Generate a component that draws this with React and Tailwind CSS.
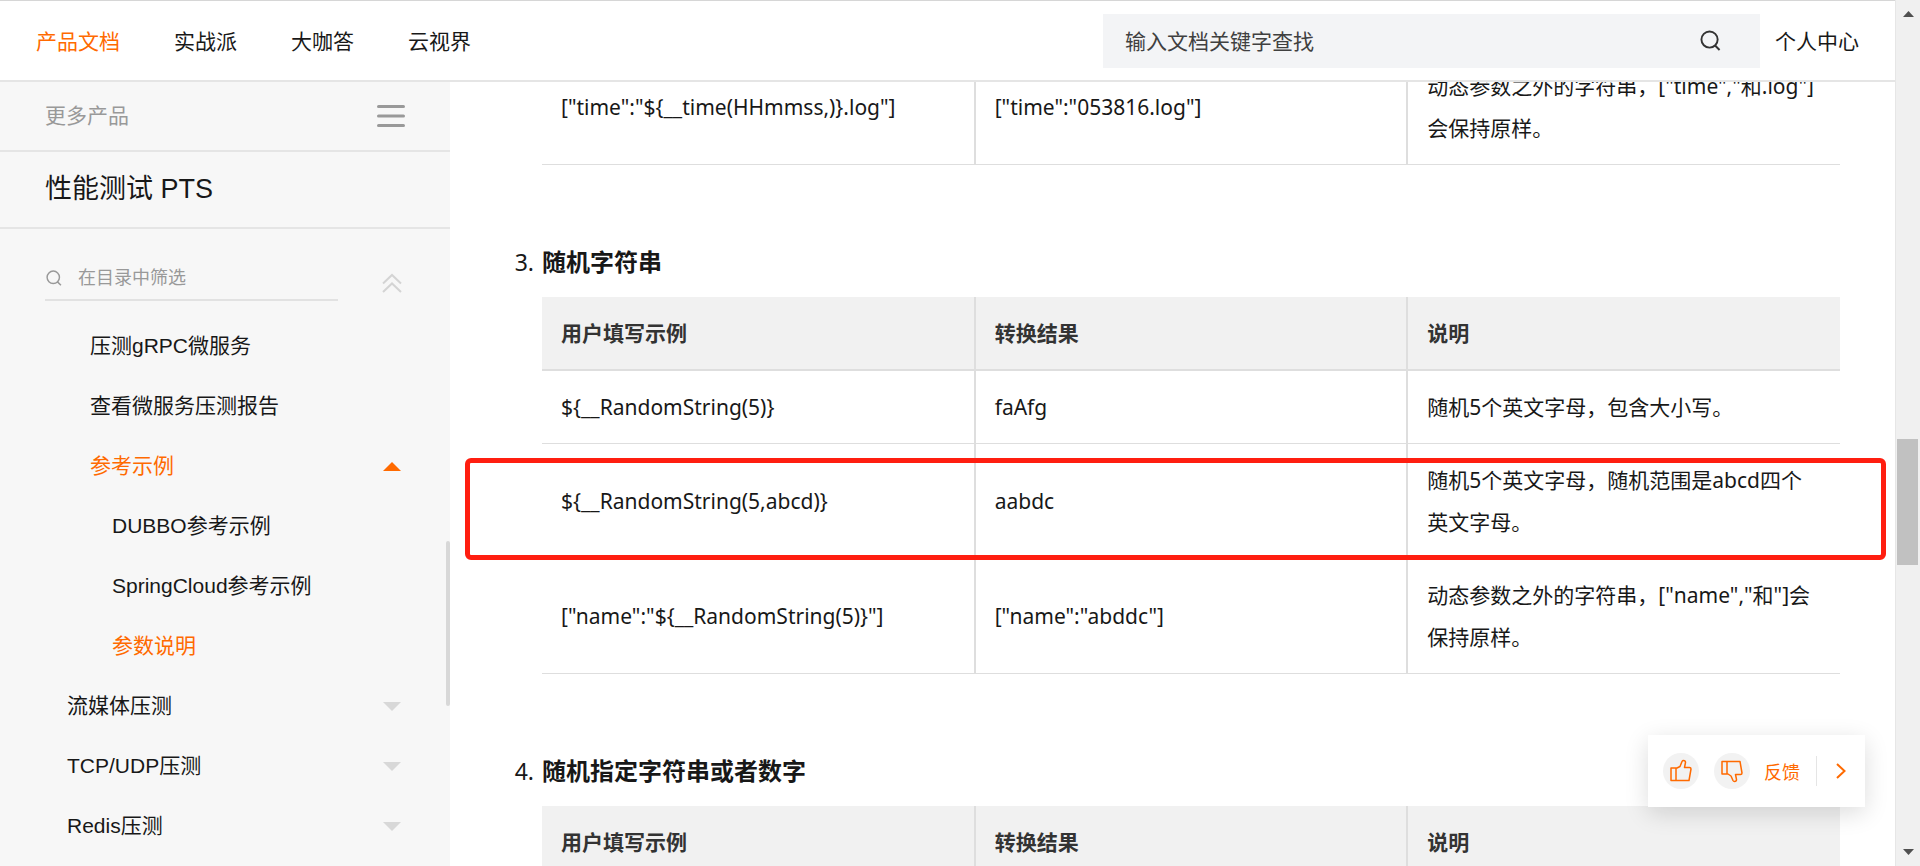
import React from 'react';

const navLinks = [
  { label: '产品文档', active: true },
  { label: '实战派' },
  { label: '大咖答' },
  { label: '云视界' },
];

const treeItems = [
  { label: '压测gRPC微服务', indent: 'pl-[90px]' },
  { label: '查看微服务压测报告', indent: 'pl-[90px]' },
  { label: '参考示例', indent: 'pl-[90px]', caret: 'up', active: true },
  { label: 'DUBBO参考示例', indent: 'pl-[112px]' },
  { label: 'SpringCloud参考示例', indent: 'pl-[112px]' },
  { label: '参数说明', indent: 'pl-[112px]', active: true },
  { label: '流媒体压测', indent: 'pl-[67px]', caret: 'down' },
  { label: 'TCP/UDP压测', indent: 'pl-[67px]', caret: 'down' },
  { label: 'Redis压测', indent: 'pl-[67px]', caret: 'down' },
];

const columns = ['用户填写示例', '转换结果', '说明'];

const timeRows = [
  ['["time":"${__time(HHmmss,)}.log"]', '["time":"053816.log"]', '动态参数之外的字符串，["time","和.log"]会保持原样。'],
];

const randomStringRows = [
  ['${__RandomString(5)}', 'faAfg', '随机5个英文字母，包含大小写。'],
  ['${__RandomString(5,abcd)}', 'aabdc', '随机5个英文字母，随机范围是abcd四个英文字母。'],
  ['["name":"${__RandomString(5)}"]', '["name":"abddc"]', '动态参数之外的字符串，["name","和"]会保持原样。'],
];

function SearchIcon({ className }) {
  return (
    <svg viewBox="0 0 22 22" className={className} fill="none" stroke="currentColor" strokeWidth="2" aria-hidden="true">
      <circle cx="10" cy="10" r="8.5" />
      <path d="M15.5 16l5 5" />
    </svg>
  );
}

function Caret({ direction }) {
  return (
    <svg
      viewBox="0 0 18 9"
      className={direction === 'up' ? 'w-[18px] h-[9px] text-[#ff6a00]' : 'w-[18px] h-[9px] text-[#d8d8d8]'}
      fill="currentColor"
      aria-hidden="true"
    >
      <path d={direction === 'up' ? 'M0 9L9 0L18 9Z' : 'M0 0H18L9 9Z'} />
    </svg>
  );
}

function ThumbIcon({ down }) {
  return (
    <svg viewBox="0 0 24 24" className="w-6 h-6" fill="none" stroke="currentColor" strokeWidth="1.5" strokeLinejoin="round" aria-hidden="true">
      {down ? (
        <path d="M2 2.5H20L22 14Q22 15.5 20.5 15.5H15.5L16.5 20.5Q16.5 22.5 14.5 22.5Q13.5 22.5 13 21.5L11 17L8 15H2ZM7 2.5V15" />
      ) : (
        <path d="M2 9H8L11 7.5L13 2.5Q13.5 1.5 14.5 1.5Q16.5 1.5 16.5 3.5L15.5 8.5H20.5Q22 8.5 22 10L20 21.5H2ZM7 9V21.5" />
      )}
    </svg>
  );
}

function Header() {
  return (
    <header className="h-[82px] shrink-0 flex items-center justify-between border-t border-t-[#d6d6d6] border-b-2 border-b-[#e5e5e5] bg-white pl-9 pr-9 text-[21px] text-[#181818]">
      <nav className="flex gap-[54px]">
        {navLinks.map((link) => (
          <a key={link.label} href="#" className={link.active ? 'text-[#ff6a00]' : ''}>
            {link.label}
          </a>
        ))}
      </nav>
      <div className="flex items-center gap-[15px]">
        <form className="w-[657px] h-[54px] flex items-center bg-[#f3f4f6] pl-[22px] pr-[39px]">
          <input
            type="text"
            aria-label="输入文档关键字查找"
            placeholder="输入文档关键字查找"
            className="grow bg-transparent outline-none placeholder:text-[#404040]"
          />
          <button type="button" aria-label="搜索" className="text-[#333]">
            <SearchIcon className="w-[21px] h-[21px]" />
          </button>
        </form>
        <a href="#">个人中心</a>
      </div>
    </header>
  );
}

function Sidebar() {
  return (
    <aside className="relative w-[450px] shrink-0 overflow-hidden bg-[#f7f7f7] font-['Liberation_Sans','Noto_Sans_CJK_SC',sans-serif] text-[21px] text-[#181818]">
      <div className="h-[70px] flex items-center justify-between border-b-2 border-[#e5e5e5] pl-[45px] pr-[45px] text-[#999]">
        <a href="#">更多产品</a>
        <button type="button" aria-label="展开产品列表">
          <svg viewBox="0 0 28 24" className="w-7 h-6" stroke="currentColor" strokeWidth="3" strokeLinecap="round" aria-hidden="true">
            <path d="M1.5 2.5H26.5M1.5 12H26.5M1.5 21.5H26.5" />
          </svg>
        </button>
      </div>
      <h2 className="h-[77px] flex items-center border-b-2 border-[#e5e5e5] pl-[45px] text-[27px]">性能测试 PTS</h2>
      <div className="flex items-center justify-between pl-[45px] pr-12 pt-7 pb-[15px]">
        <label className="w-[293px] h-11 flex items-center gap-4 border-b-2 border-[#e2e2e2] pl-px text-[#999]">
          <SearchIcon className="w-4 h-4 shrink-0" />
          <input
            type="text"
            aria-label="在目录中筛选"
            placeholder="在目录中筛选"
            className="min-w-0 grow bg-transparent text-lg outline-none placeholder:text-[#999]"
          />
        </label>
        <button type="button" aria-label="全部收起" className="pt-2 text-[#d4d4d4]">
          <svg viewBox="0 0 20 20" className="w-5 h-5" fill="none" stroke="currentColor" strokeWidth="2" aria-hidden="true">
            <path d="M1 10.5L10 2L19 10.5M1 19L10 10.5L19 19" />
          </svg>
        </button>
      </div>
      <ul>
        {treeItems.map((item) => (
          <li key={item.label} className={item.indent}>
            <a
              href="#"
              className={
                item.active
                  ? 'h-[60px] flex items-center justify-between pr-[49px] text-[#ff6a00]'
                  : 'h-[60px] flex items-center justify-between pr-[49px]'
              }
            >
              {item.label}
              {item.caret && <Caret direction={item.caret} />}
            </a>
          </li>
        ))}
      </ul>
      {/* Scroll thumb */}
      <div className="absolute right-0 top-[459px] w-1 h-[165px] rounded-full bg-[#d8d8d8]" />
    </aside>
  );
}

function DocTable({ rows, showHead = true }) {
  return (
    <table className="w-full table-fixed border-collapse text-left text-[21px] leading-[42px]">
      {showHead && (
        <thead>
          <tr className="border-b-2 border-[#dedede] bg-[#f1f1f1] text-[#333]">
            {columns.map((name) => (
              <th key={name} scope="col" className="border-l-2 border-[#dedede] px-[19px] py-[15px] font-bold first:border-l-0">
                {name}
              </th>
            ))}
          </tr>
        </thead>
      )}
      <tbody>
        {rows.map((cells) => (
          <tr key={cells[0]} className="border-b border-[#dedede]">
            {cells.map((cell) => (
              <td key={cell} className="border-l-2 border-[#dedede] px-[19px] py-[15px] first:border-l-0">
                {cell}
              </td>
            ))}
          </tr>
        ))}
      </tbody>
    </table>
  );
}

function Section({ number, title, children }) {
  return (
    <li className="grid grid-cols-[92px_minmax(0,1fr)] pt-[76px]">
      <span className="pr-2 text-right text-[23px] leading-[42px]">{number}.</span>
      <h3 className="mb-[14px] text-2xl leading-[42px] font-bold">{title}</h3>
      <div className="relative col-start-2">{children}</div>
    </li>
  );
}

function FeedbackBar() {
  return (
    <div className="absolute right-[30px] bottom-[59px] w-[217px] h-[72px] flex items-center bg-white pl-[15px] pr-[19px] text-lg text-[#ff6a00] shadow-[0_6px_24px_rgba(0,0,0,0.14)]">
      <button type="button" aria-label="有帮助" className="w-9 h-9 flex items-center justify-center rounded-full bg-[#f2f2f2]">
        <ThumbIcon />
      </button>
      <button type="button" aria-label="没帮助" className="ml-[15px] w-9 h-9 flex items-center justify-center rounded-full bg-[#f2f2f2]">
        <ThumbIcon down />
      </button>
      <button type="button" className="ml-[14px]">反馈</button>
      <span className="ml-4 w-px h-[30px] bg-[#e5e5e5]" />
      <button type="button" aria-label="收起" className="ml-auto">
        <svg viewBox="0 0 10 16" className="w-[10px] h-4" fill="none" stroke="currentColor" strokeWidth="2" aria-hidden="true">
          <path d="M1 1L8.5 8L1 15" />
        </svg>
      </button>
    </div>
  );
}

function PageScrollbar() {
  return (
    <div className="relative w-[25px] shrink-0 flex flex-col items-center justify-between border-l border-[#e6e6e6] bg-[#f0f0f0] py-[11px] text-[#505050]">
      <svg viewBox="0 0 11 6" className="w-[11px] h-[6px]" fill="currentColor" aria-hidden="true">
        <path d="M0 6L5.5 0L11 6Z" />
      </svg>
      <div className="absolute top-[439px] left-px w-[21px] h-[126px] bg-[#c1c1c1]" />
      <svg viewBox="0 0 11 6" className="w-[11px] h-[6px]" fill="currentColor" aria-hidden="true">
        <path d="M0 0H11L5.5 6Z" />
      </svg>
    </div>
  );
}

export default function App() {
  return (
    <div className="h-screen flex overflow-hidden bg-white font-['Noto_Sans_CJK_SC',sans-serif] text-[#181818]">
      <div className="relative min-w-0 grow flex flex-col">
        <Header />
        <div className="min-h-0 grow flex">
          <Sidebar />
          <main className="min-w-0 grow overflow-hidden pr-[55px] font-['Noto_Sans','Noto_Sans_CJK_SC',sans-serif]">
            {/* Tail of the previous section, scrolled under the header */}
            <div className="-mt-8 pl-[92px]">
              <DocTable rows={timeRows} showHead={false} />
            </div>
            <ol>
              <Section number={3} title="随机字符串">
                <DocTable rows={randomStringRows} />
                {/* Highlight around the abcd row */}
                <div className="absolute top-[161px] -left-[77px] -right-[46px] h-[102px] rounded-md border-5 border-[#ff1e10] pointer-events-none" />
              </Section>
              <Section number={4} title="随机指定字符串或者数字">
                <DocTable rows={[]} />
              </Section>
            </ol>
          </main>
        </div>
        <FeedbackBar />
      </div>
      <PageScrollbar />
    </div>
  );
}
